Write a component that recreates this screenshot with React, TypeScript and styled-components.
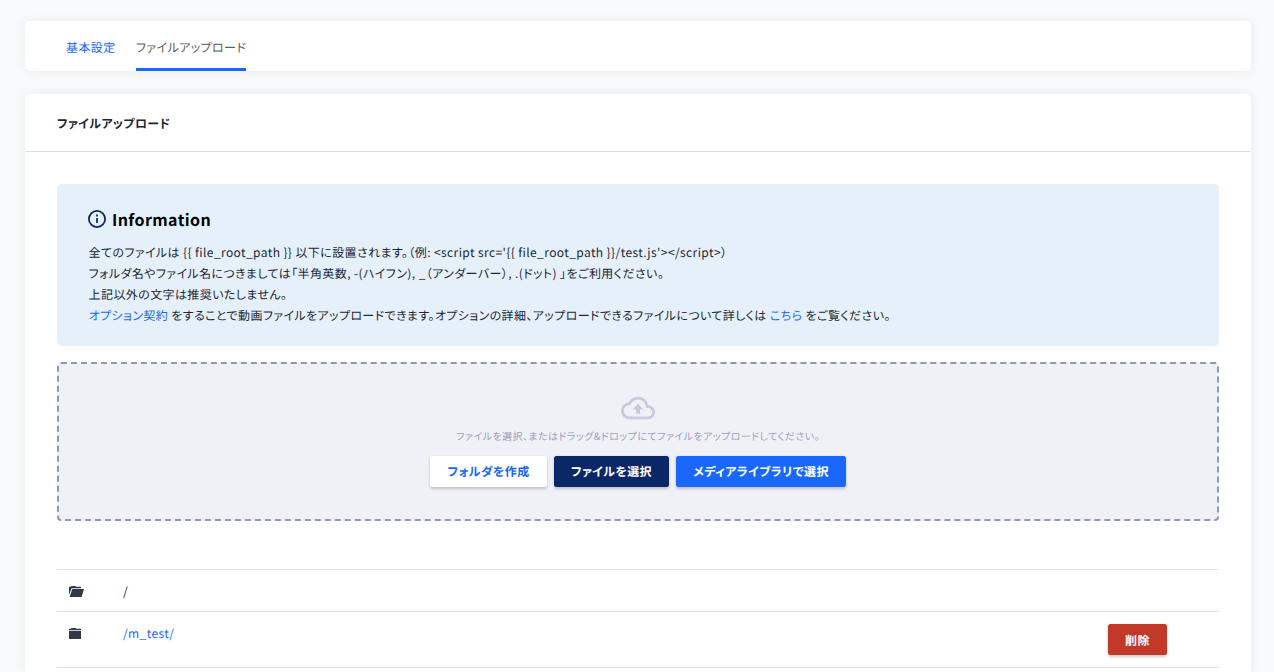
import React from "react";
import styled, { createGlobalStyle, css } from "styled-components";

const GlobalStyle = createGlobalStyle`
  *, *::before, *::after { box-sizing: border-box; }
  body {
    margin: 0;
    background: #f7f9fb;
    color: #212633;
    font-family: "Noto Sans CJK JP", "Noto Sans", sans-serif;
    font-size: 12px;
    line-height: 21px;
    letter-spacing: 0.4px;
    font-feature-settings: "palt";
    text-rendering: geometricPrecision;
  }
`;

const Page = styled.main`
  display: flex;
  flex-direction: column;
  gap: 23px;
  height: 672px;
  overflow: hidden;
  padding: 21px 23px 0 25px;
`;

const Card = styled.section`
  flex: none;
  background: #fff;
  border-radius: 5px;
  box-shadow: 0 0 12px rgba(30, 50, 80, 0.06);
`;

const Tabs = styled(Card)`
  display: flex;
  gap: 20.4px;
  height: 50px;
  padding-left: 41px;
`;

const Tab = styled.a<{ $active?: boolean }>`
  padding-top: 16px;
  white-space: nowrap;
  color: ${(p) => (p.$active ? "#5c5c5c" : "#1967fc")};
  border-bottom: 3px solid ${(p) => (p.$active ? "#1967fc" : "transparent")};
`;

const Panel = styled(Card)`
  flex: 1;
  min-height: 0;
  border-radius: 5px 5px 0 0;
`;

const PanelHeader = styled.h2`
  margin: 0;
  height: 58px;
  padding: 19px 32px 0;
  border-bottom: 1px solid #dcdfe1;
  font-size: 12px;
  font-weight: 700;
  letter-spacing: 0.385px;
`;

const PanelBody = styled.div`
  padding: 32px 32px 0;
`;

const InfoBox = styled.div`
  height: 162px;
  padding: 25px 32px 0 31px;
  border-radius: 5px;
  background: #e5f0fa;
`;

const InfoTitle = styled.div`
  display: flex;
  align-items: center;
  gap: 4px;
  height: 21px;
  margin-bottom: 12px;
  color: #000;
  font-size: 16px;
  font-weight: 700;
`;

const InfoLine = styled.p`
  margin: 0;
  padding-left: 0.6px;
  white-space: nowrap;
`;

const Link = styled.a`
  color: #1967fc;
`;

const DropZone = styled.div`
  display: flex;
  flex-direction: column;
  align-items: center;
  height: 159px;
  margin-top: 16px;
  padding-top: 26.5px;
  border: 2px dashed #8f98b9;
  border-radius: 4px;
  background: #f0f1f7;
`;

const DropHint = styled.p`
  margin: 0.5px 0 10px;
  color: #98a0bb;
  font-size: 10px;
  letter-spacing: 0.43px;
  white-space: nowrap;
`;

const ButtonRow = styled.div`
  display: flex;
  gap: 7px;
`;

const tones = {
  light: css`background: #fff; color: #1967fc;`,
  navy: css`background: #0b2768; color: #fff;`,
  blue: css`background: #1967fc; color: #fff;`,
  danger: css`background: #c23829; color: #fff;`,
};

const Button = styled.button<{ $tone: keyof typeof tones; $width: number }>`
  width: ${(p) => p.$width}px;
  height: 31px;
  padding: 0 0 1px;
  border: 0;
  border-radius: 2.5px;
  box-shadow: 0 1.5px 3px rgba(0, 0, 0, 0.2);
  font: inherit;
  font-weight: 700;
  letter-spacing: 0.385px;
  text-rendering: inherit;
  white-space: nowrap;
  ${(p) => tones[p.$tone]}
`;

const FileList = styled.div`
  margin-top: 48px;
`;

const FileRow = styled.div<{ $height: number }>`
  display: grid;
  grid-template-columns: 54px 1fr 59px;
  align-items: start;
  height: ${(p) => p.$height}px;
  padding: 11px 52px 0 12px;
  border-top: 1px solid #dfe1ea;

  ${Button} {
    margin-top: 1px;
    padding: 1px 0 0;
  }
`;

const FileListEnd = styled.div`
  border-top: 1px solid #dfe1ea;
`;

const FolderIcon = styled.svg`
  display: block;
  margin-top: 4px;
  fill: #31384a;
`;

const InfoIcon = () => (
  <svg width="20" height="20" viewBox="0 0 20 20" fill="none">
    <circle cx="9" cy="9" r="8.1" stroke="#0b2768" strokeWidth="1.8" />
    <path d="M8.1 8.1h1.8v5H8.1zM8.1 4.6h1.8v1.8H8.1z" fill="#0b2768" />
  </svg>
);

const CloudIcon = () => (
  <svg width="34" height="34" viewBox="0 0 24 24" fill="#c6cadb">
    <path d="M19.35 10.04C18.67 6.59 15.64 4 12 4 9.11 4 6.6 5.64 5.35 8.04 2.34 8.36 0 10.91 0 14c0 3.31 2.69 6 6 6h13c2.76 0 5-2.24 5-5 0-2.64-2.05-4.78-4.65-4.96zM19 18H6c-2.21 0-4-1.79-4-4 0-2.05 1.53-3.76 3.56-3.97l1.07-.11.5-.95C8.08 7.14 9.94 6 12 6c2.62 0 4.88 1.86 5.39 4.43l.3 1.5 1.53.11c1.56.1 2.78 1.41 2.78 2.96 0 1.65-1.35 3-3 3zM8 13h2.55v3h2.9v-3H16l-4-4z" />
  </svg>
);

export default function App() {
  return (
    <>
      <GlobalStyle />
      <Page>
        <Tabs as="nav">
          <Tab>基本設定</Tab>
          <Tab $active>ファイルアップロード</Tab>
        </Tabs>
        <Panel>
          <PanelHeader>ファイルアップロード</PanelHeader>
          <PanelBody>
            <InfoBox>
              <InfoTitle>
                <InfoIcon />
                <span>Information</span>
              </InfoTitle>
              <InfoLine>
                {"全てのファイルは {{ file_root_path }} 以下に設置されます。（例: <script src='{{ file_root_path }}/test.js'></script>）"}
              </InfoLine>
              <InfoLine>
                フォルダ名やファイル名につきましては「半角英数, -(ハイフン), _（アンダーバー）, .(ドット) 」をご利用ください。
              </InfoLine>
              <InfoLine>上記以外の文字は推奨いたしません。</InfoLine>
              <InfoLine>
                <Link>オプション契約</Link> をすることで動画ファイルをアップロードできます。オプションの詳細、アップロードできるファイルについて詳しくは <Link>こちら</Link> をご覧ください。
              </InfoLine>
            </InfoBox>
            <DropZone>
              <CloudIcon />
              <DropHint>ファイルを選択、またはドラッグ&amp;ドロップにてファイルをアップロードしてください。</DropHint>
              <ButtonRow>
                <Button $tone="light" $width={117}>フォルダを作成</Button>
                <Button $tone="navy" $width={115}>ファイルを選択</Button>
                <Button $tone="blue" $width={170}>メディアライブラリで選択</Button>
              </ButtonRow>
            </DropZone>
            <FileList>
              <FileRow $height={42}>
                <FolderIcon width="16" height="12" viewBox="0 0 16 12">
                  <path d="M0 10V1.8h2L2.4 1h4l.4.8H12V3.2H2.6L0 10z" />
                  <path d="M3.3 4.1H15L12.6 12H.6z" />
                </FolderIcon>
                <span>/</span>
              </FileRow>
              <FileRow $height={56}>
                <FolderIcon width="12" height="12" viewBox="0 0 12 12">
                  <path d="M0 1.8h2L2.4 1h4.2l.4.8h5V3.2H0zM0 4.1h12V12H0z" />
                </FolderIcon>
                <Link>/m_test/</Link>
                <Button $tone="danger" $width={59}>削除</Button>
              </FileRow>
              <FileListEnd />
            </FileList>
          </PanelBody>
        </Panel>
      </Page>
    </>
  );
}
